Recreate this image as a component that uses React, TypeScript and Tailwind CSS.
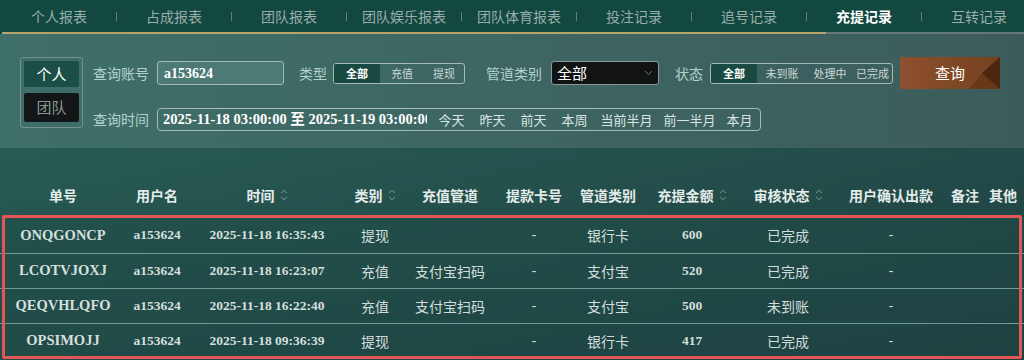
import React from "react";

const CJK = "font-['Noto_Sans_CJK_SC','Noto_Sans',sans-serif]";
const SERIF = "font-['Liberation_Serif','Noto_Sans_CJK_SC',serif]";

const navItems = ["个人报表", "占成报表", "团队报表", "团队娱乐报表", "团队体育报表", "投注记录", "追号记录", "充提记录", "互转记录"];

const SortIcon = () => (
  <svg width="8" height="14" viewBox="0 0 8 14" className="ml-[5px] shrink-0">
    <path d="M1.2 5 L4 2.2 L6.8 5" stroke="#7f9d98" strokeWidth="1" fill="none" />
    <path d="M1.2 9 L4 11.8 L6.8 9" stroke="#7f9d98" strokeWidth="1" fill="none" />
  </svg>
);

const cols = [126, 62, 158, 58, 92, 76, 72, 96, 96, 110, 38, 38];
const headers: { t: string; sort?: boolean }[] = [
  { t: "单号" },
  { t: "用户名" },
  { t: "时间", sort: true },
  { t: "类别", sort: true },
  { t: "充值管道" },
  { t: "提款卡号" },
  { t: "管道类别" },
  { t: "充提金额", sort: true },
  { t: "审核状态", sort: true },
  { t: "用户确认出款" },
  { t: "备注" },
  { t: "其他" },
];

const rows = [
  ["ONQGONCP", "a153624", "2025-11-18 16:35:43", "提现", "", "-", "银行卡", "600", "已完成", "-"],
  ["LCOTVJOXJ", "a153624", "2025-11-18 16:23:07", "充值", "支付宝扫码", "-", "支付宝", "520", "已完成", "-"],
  ["QEQVHLQFO", "a153624", "2025-11-18 16:22:40", "充值", "支付宝扫码", "-", "支付宝", "500", "未到账", "-"],
  ["OPSIMOJJ", "a153624", "2025-11-18 09:36:39", "提现", "", "-", "银行卡", "417", "已完成", "-"],
];
const latinCols = new Set([0, 1, 2, 5, 7, 9]);

function Seg({ items, widths }: { items: string[]; widths: number[] }) {
  return (
    <div className="flex h-[21px] rounded-[3px] border border-[#a3bab6] overflow-hidden">
      {items.map((it, i) => (
        <div
          key={it}
          style={{ width: widths[i] }}
          className={
            "flex items-center justify-center text-[11px] whitespace-nowrap " +
            (i === 0 ? "bg-[#184a41] text-white font-bold" : "text-[#c9d9d6]")
          }
        >
          {it}
        </div>
      ))}
    </div>
  );
}

export default function App() {
  return (
    <div className={"w-[1024px] h-[360px] overflow-hidden " + CJK}>
      {/* nav */}
      <div className="h-[32px] bg-[#124840] flex pl-[2px] items-center">
        {navItems.map((n, i) => (
          <React.Fragment key={n}>
            <div
              className={
                "w-[114px] shrink-0 text-center text-[14px] whitespace-nowrap " +
                (i === 7 ? "text-white font-bold" : "text-[#98aeaa]")
              }
            >
              {n}
            </div>
            {i < navItems.length - 1 && <div className="w-px h-[9px] shrink-0 bg-[#5d7f79]" />}
          </React.Fragment>
        ))}
      </div>
      <div className="h-[2px] flex">
        <div className="w-[2px] bg-[#124840]" />
        <div className="w-[824px] bg-[#b7a46c]" />
        <div className="flex-1 bg-[#657a76]" />
      </div>

      {/* filters */}
      <div className="h-[114px] bg-gradient-to-r from-[#3f6f69] to-[#3c5c5b] pl-[20px] pt-[23px] flex text-[14px]">
        <div className="w-[63px] h-[71px] shrink-0 rounded-[3px] border border-[#76928e] p-[3px] flex flex-col gap-[6px]">
          <div className="h-[26px] rounded-[2px] bg-[#1b4e45] text-white text-[15px] flex items-center justify-center">个人</div>
          <div className="h-[29px] rounded-[2px] bg-[#121617] text-[#8a9896] text-[15px] flex items-center justify-center">团队</div>
        </div>
        <div className="ml-[10px] flex flex-col">
          <div className="h-[32px] flex items-center whitespace-nowrap">
            <span className="text-[#b3d2cc]">查询账号</span>
            <div className="ml-[8px] w-[127px] h-[24px] shrink-0 rounded-[3px] border border-[#a3bab6] bg-[#4c7b75] flex items-center pl-[6px]">
              <span className={SERIF + " font-bold text-white text-[14px]"}>a153624</span>
            </div>
            <span className="ml-[15px] text-[#b3d2cc]">类型</span>
            <div className="ml-[6px] shrink-0">
              <Seg items={["全部", "充值", "提现"]} widths={[46, 44, 40]} />
            </div>
            <span className="ml-[21px] text-[#b3d2cc]">管道类别</span>
            <div className="ml-[9px] w-[108px] h-[24px] shrink-0 rounded-[3px] border border-[#8a9c9a] bg-[#121414] flex items-center pl-[5px] pr-[5px] justify-between">
              <span className="text-white text-[15px]">全部</span>
              <svg width="9" height="6" viewBox="0 0 9 6">
                <path d="M1 1 L4.5 4.5 L8 1" stroke="#6d7775" strokeWidth="1" fill="none" />
              </svg>
            </div>
            <span className="ml-[16px] text-[#b3d2cc]">状态</span>
            <div className="ml-[7px] shrink-0">
              <Seg items={["全部", "未到账", "处理中", "已完成"]} widths={[46, 50, 46, 39]} />
            </div>
            <button className="ml-[7px] shrink-0 relative w-[100px] h-[32px] overflow-hidden bg-gradient-to-r from-[#8e502e] to-[#74421f] text-white text-[15px]">
              <svg className="absolute right-0 top-0" width="32" height="32" viewBox="0 0 32 32">
                <polygon points="14,16 1,32 32,32" fill="#6a3819" />
                <polygon points="32,0 14,16 32,32" fill="#4b2610" />
              </svg>
              <span className="relative">查询</span>
            </button>
          </div>
          <div className="mt-[19px] h-[23px] flex items-center whitespace-nowrap">
            <span className="text-[#b3d2cc]">查询时间</span>
            <div className="ml-[8px] w-[604px] h-[23px] shrink-0 rounded-[4px] border border-[#a3bab6] flex items-center">
              <div className="w-[269px] shrink-0 pl-[5px] overflow-hidden whitespace-nowrap">
                <span className={SERIF + " font-bold text-white text-[14.5px]"}>2025-11-18 03:00:00 至 2025-11-19 03:00:00</span>
              </div>
              <div className="ml-[4px] flex shrink-0 whitespace-nowrap text-[#d9e5e2] text-[13px]">
                {["今天", "昨天", "前天", "本周", "当前半月", "前一半月", "本月"].map((q, i) => (
                  <span key={q} className={i < 4 ? "px-[7.5px]" : "px-[5.5px]"}>{q}</span>
                ))}
              </div>
            </div>
          </div>
        </div>
      </div>

      {/* table */}
      <div className="relative h-[212px] bg-gradient-to-br from-[#285b54] to-[#1d3c3e]">
        <div className="h-[70px] flex items-end pb-[13px]">
          {headers.map((h, i) => (
            <div
              key={h.t}
              style={{ width: cols[i] }}
              className="shrink-0 flex items-center justify-center whitespace-nowrap text-[14px] font-bold text-[#e4ecea] h-[20px]"
            >
              {h.t}
              {h.sort && <SortIcon />}
            </div>
          ))}
        </div>
        <div className="bg-[#1f4a45]/40">
          {rows.map((r, ri) => (
            <div key={ri} className={"h-[35px] flex items-center " + (ri > 0 ? "border-t border-[#729b95]" : "")}>
              {cols.map((w, ci) => {
                const v = r[ci] ?? "";
                const latin = latinCols.has(ci);
                return (
                  <div
                    key={ci}
                    style={{ width: w }}
                    className={
                      "shrink-0 text-center whitespace-nowrap " +
                      (latin
                        ? SERIF + " font-bold text-[#d5dfdc] " + (ci === 0 ? "text-[14.5px]" : "text-[13.5px]")
                        : "text-[14px] text-[#d3dddb]")
                    }
                  >
                    {v}
                  </div>
                );
              })}
            </div>
          ))}
        </div>
        <div className="pointer-events-none absolute left-[2px] top-[67px] w-[1020px] h-[144px] border-[3px] border-[#e25656] rounded-[2px]" />
      </div>
    </div>
  );
}
